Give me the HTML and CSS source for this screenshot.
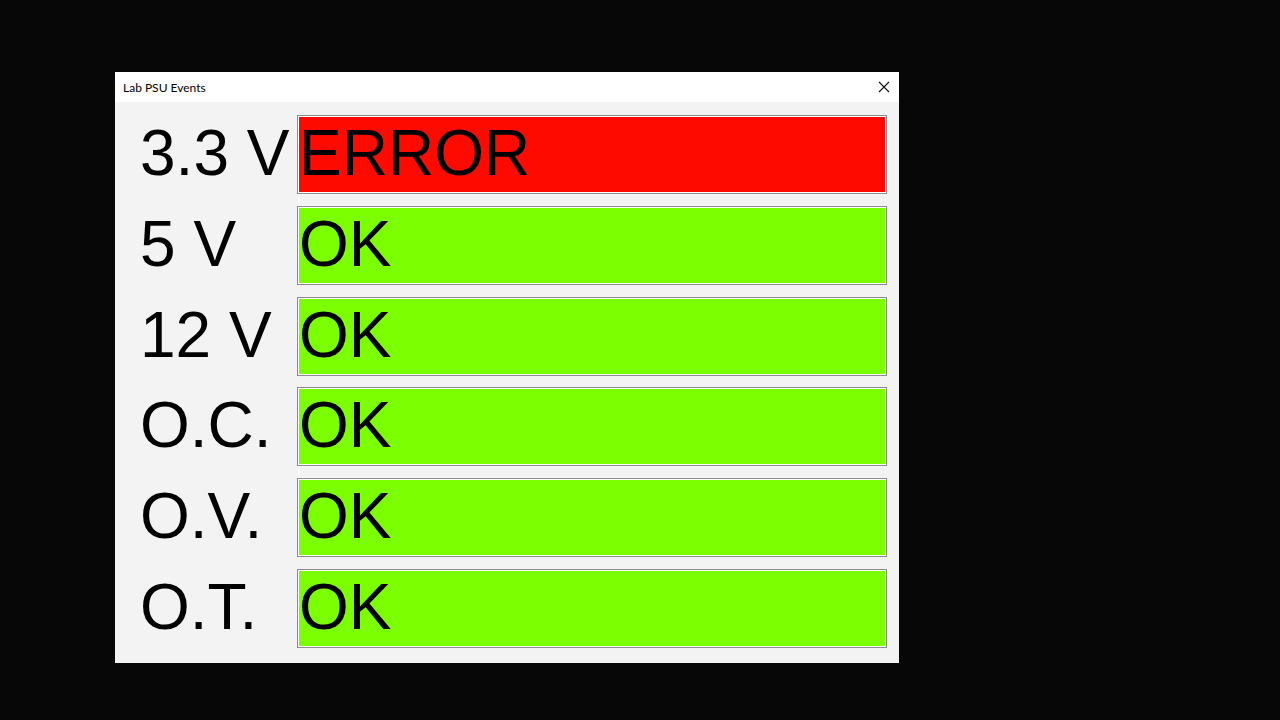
FILE: index.html
```html
<!DOCTYPE html>
<html>
<head>
<meta charset="utf-8">
<link rel="stylesheet" href="styles.css">
</head>
<body>
<div class="window">
  <div class="titlebar">
    <span class="title">Lab PSU Events</span>
    <svg class="close" width="12" height="12" viewBox="0 0 12 12"><path d="M1 1 L11 11 M11 1 L1 11" stroke="#111" stroke-width="1.1" fill="none"/></svg>
  </div>
  <div class="content">
    <div class="label">3.3 V</div><div class="bar err">ERROR</div>
    <div class="label">5 V</div><div class="bar ok">OK</div>
    <div class="label">12 V</div><div class="bar ok">OK</div>
    <div class="label">O.C.</div><div class="bar ok">OK</div>
    <div class="label">O.V.</div><div class="bar ok">OK</div>
    <div class="label">O.T.</div><div class="bar ok">OK</div>
  </div>
</div>
</body>
</html>
```
FILE: styles.css
```css
html, body { margin: 0; padding: 0; }
body {
  background: #070707;
  width: 1280px;
  height: 720px;
  overflow: hidden;
  font-family: "Liberation Sans", Arial, sans-serif;
}
.window {
  margin: 72px 0 0 115px;
  width: 784px;
  height: 591px;
  background: #f3f3f3;
  display: flex;
  flex-direction: column;
}
.titlebar {
  height: 30px;
  flex: none;
  background: #ffffff;
  display: flex;
  align-items: center;
  justify-content: space-between;
  padding: 0 9px 0 8px;
}
.title {
  font-family: "Lato", "Noto Sans", sans-serif;
  font-size: 12px;
  color: #000;
}
.close { display: block; }
.content {
  display: grid;
  grid-template-columns: 182px 1fr;
  grid-auto-rows: 79px;
  row-gap: 11.8px;
  padding: 13px 12px 0 0;
}
.label {
  padding-left: 25px;
  padding-bottom: 3px;
  font-size: 64px;
  line-height: 1;
  color: #000;
  display: flex;
  align-items: center;
  white-space: nowrap;
}
.bar {
  box-sizing: border-box;
  border: 1px solid #8c8c8c;
  box-shadow: inset 0 0 0 1px #ffffff;
  font-size: 64px;
  color: #000;
  display: flex;
  align-items: center;
  padding-left: 1px;
  padding-bottom: 3px;
  line-height: 1;
}
.err { background: #ff0a00; }
.ok { background: #7cff00; }
```
